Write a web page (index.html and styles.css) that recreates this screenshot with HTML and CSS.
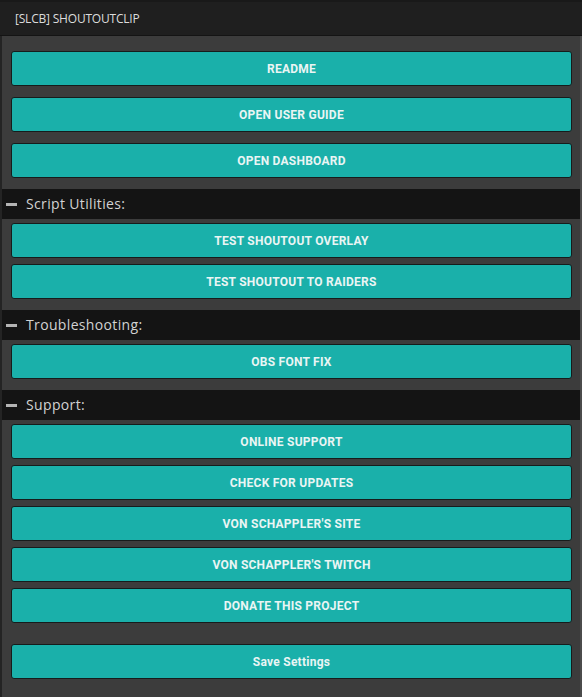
FILE: index.html
```html
<!DOCTYPE html>
<html>
<head>
<meta charset="utf-8">
<link rel="stylesheet" href="styles.css">
</head>
<body>
<div class="window">
  <div class="titlebar">[SLCB] SHOUTOUTCLIP</div>
  <div class="content">
    <div class="group group-top">
      <button class="btn">README</button>
      <button class="btn">OPEN USER GUIDE</button>
      <button class="btn">OPEN DASHBOARD</button>
    </div>
    <div class="section"><span class="dash"></span><span class="section-title">Script Utilities:</span></div>
    <div class="group">
      <button class="btn">TEST SHOUTOUT OVERLAY</button>
      <button class="btn">TEST SHOUTOUT TO RAIDERS</button>
    </div>
    <div class="section"><span class="dash"></span><span class="section-title">Troubleshooting:</span></div>
    <div class="group">
      <button class="btn">OBS FONT FIX</button>
    </div>
    <div class="section"><span class="dash"></span><span class="section-title">Support:</span></div>
    <div class="group group-last">
      <button class="btn">ONLINE SUPPORT</button>
      <button class="btn">CHECK FOR UPDATES</button>
      <button class="btn">VON SCHAPPLER'S SITE</button>
      <button class="btn">VON SCHAPPLER'S TWITCH</button>
      <button class="btn">DONATE THIS PROJECT</button>
    </div>
    <div class="group group-save">
      <button class="btn">Save Settings</button>
    </div>
  </div>
</div>
</body>
</html>
```

FILE: styles.css
```css
html, body {
  margin: 0;
  padding: 0;
  background: #3c3c3c;
}
.window {
  width: 582px;
  height: 697px;
  display: flex;
  flex-direction: column;
  overflow: hidden;
}
.titlebar {
  height: 33px;
  border-top: 2px solid #191919;
  border-bottom: 1px solid #141414;
  background: #1f1f1f;
  color: #dcdcdc;
  font-family: "Open Sans", "Liberation Sans", sans-serif;
  font-size: 12px;
  line-height: 33px;
  padding-left: 15px;
  letter-spacing: -0.2px;
}
.content {
  flex: 1;
  border-left: 2px solid #242424;
  border-right: 2px solid #4b4b4b;
  background: #3c3c3c;
  display: flex;
  flex-direction: column;
}
.group {
  display: flex;
  flex-direction: column;
  gap: 6px;
  padding: 4px 8px 11px 9px;
}
.group-top {
  gap: 11px;
  padding-top: 15px;
}
.group-last {
  padding-bottom: 21px;
}
.group-save {
  padding-top: 0;
}
.btn {
  height: 35px;
  margin: 0;
  padding: 0;
  border: 1px solid #161c1c;
  border-radius: 3px;
  background: #1ab0aa;
  color: #eaf5f4;
  font-family: Roboto, "Liberation Sans", sans-serif;
  font-weight: 700;
  font-size: 12px;
  letter-spacing: 0.25px;
  text-align: center;
}
.section {
  height: 30px;
  background: #141414;
  display: flex;
  align-items: center;
}
.dash {
  width: 11px;
  height: 3px;
  background: #b4b4b4;
  margin-left: 4px;
  margin-right: 9px;
}
.section-title {
  color: #d2d2d2;
  font-family: "Open Sans", "Liberation Sans", sans-serif;
  font-size: 14px;
  letter-spacing: 0.35px;
  position: relative;
  top: -1px;
}
```
